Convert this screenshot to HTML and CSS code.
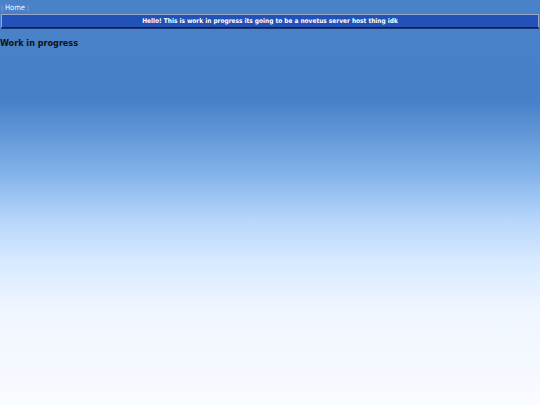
FILE: index.html
```html
<!DOCTYPE html>
<html>
<head>
<meta charset="utf-8">
<link rel="stylesheet" href="styles.css">
</head>
<body>
<nav class="nav"><span class="sep">|</span> <a class="nav-link" href="#">Home</a> <span class="sep">|</span></nav>
<div class="banner">Hello! This is work in progress its going to be a novetus server host thing idk</div>
<h1 class="title">Work in progress</h1>
</body>
</html>
```
FILE: styles.css
```css
html {
  height: 100%;
  background: linear-gradient(to bottom, #4a82c8 0px, #4680c8 100px, #7fb0e8 170px, #b6d6fb 220px, #d6e9ff 260px, #f0f6ff 310px, #f8fbff 405px);
}
body {
  margin: 0;
  min-height: 100%;
  font-family: "Comic Sans MS", "DejaVu Sans Condensed", "DejaVu Sans", sans-serif;
  color: #111;
}
.nav {
  height: 14px;
  padding-left: 1px;
  font-size: 7.5px;
  line-height: 15px;
  color: #c8d4e8;
}
.sep {
  color: #a8bad8;
  font-size: 6px;
}
.nav-link {
  color: #f4f8ff;
  text-decoration: none;
}
.banner {
  margin: 0 1px;
  height: 12px;
  line-height: 12px;
  background: #2252b8;
  border-top: 1px solid #9aa8c8;
  border-left: 1px solid #9aa8c8;
  border-right: 1px solid #9aa8c8;
  border-bottom: 1px solid #102040;
  box-shadow: 0 1px 0 #1a3570;
  color: #ffffff;
  font-size: 6.5px;
  font-weight: bold;
  text-align: center;
}
.title {
  margin: 9px 0 0 0;
  font-size: 9px;
  font-weight: bold;
  line-height: 12px;
}
```
